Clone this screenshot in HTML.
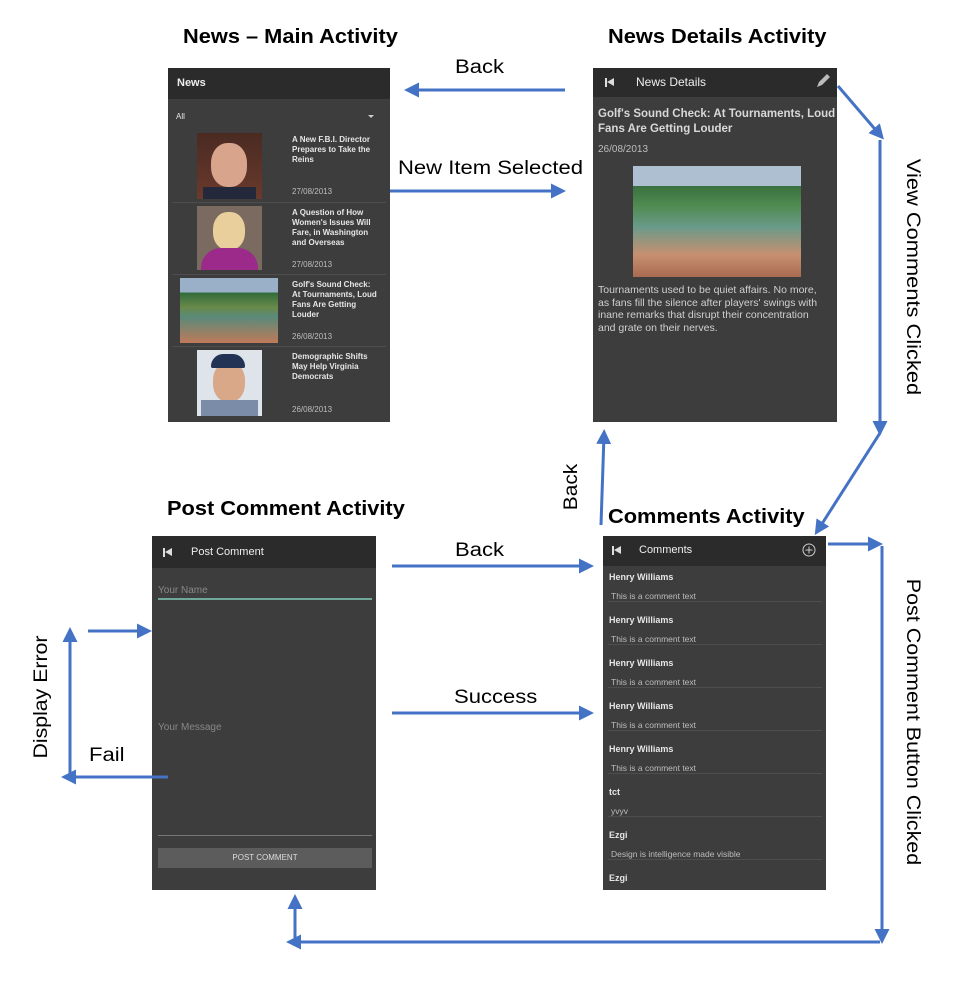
<!DOCTYPE html>
<html><head><meta charset="utf-8"><style>
*{margin:0;padding:0;box-sizing:border-box}
body{width:966px;height:998px;background:#fff;position:relative;overflow:hidden;font-family:"Liberation Sans",Arial,sans-serif}
.a{position:absolute}
.t{font-weight:bold;font-size:20px;color:#000;white-space:nowrap;transform-origin:0 0;transform:scaleX(1.09)}
.l{font-size:19px;color:#000;white-space:nowrap;transform-origin:0 0;transform:scaleX(1.16)}
.scr{background:#3d3d3d;position:absolute}
.hd{background:#2b2b2b;position:absolute;left:0;right:0;top:0;color:#eee;font-size:12px}
.w{color:#e6e6e6;position:absolute}
.g{color:#bdbdbd;position:absolute}
.sep{position:absolute;height:1px;background:#4e4e4e}
.bk{position:absolute;width:9px;height:9px}
.bk:before{content:"";position:absolute;left:0;top:0;width:2px;height:9px;background:#ddd}
.bk:after{content:"";position:absolute;left:2px;top:0;border-right:7px solid #ddd;border-top:4.5px solid transparent;border-bottom:4.5px solid transparent}
</style></head><body>

<div class="a t" style="left:183px;top:26px">News – Main Activity</div>
<div class="a t" style="left:608px;top:26px">News Details Activity</div>
<div class="a t" style="left:167px;top:498px">Post Comment Activity</div>
<div class="a t" style="left:608px;top:506px">Comments Activity</div>

<!-- Main -->
<div class="scr" style="left:168px;top:68px;width:222px;height:354px">
 <div class="hd" style="height:31px"><span style="position:absolute;left:9px;top:9px;font-weight:bold;font-size:11px">News</span></div>
 <div class="w" style="left:8px;top:44px;font-size:8px">All</div>
 <div class="a" style="left:200px;top:47px;border-top:3px solid #ccc;border-left:3px solid transparent;border-right:3px solid transparent"></div>
 <div class="a" style="left:29px;top:65px;width:65px;height:66px;background:linear-gradient(#4a2a22,#6a3a2c)"><div class="a" style="left:14px;top:10px;width:36px;height:44px;border-radius:45%;background:#d9a48c"></div><div class="a" style="left:6px;top:54px;width:53px;height:12px;background:#23283a"></div></div>
 <div class="w" style="left:124px;top:67px;font-size:8px;font-weight:bold;line-height:10px;width:90px">A New F.B.I. Director Prepares to Take the Reins</div>
 <div class="g" style="left:124px;top:119px;font-size:8px">27/08/2013</div>
 <div class="sep" style="left:4px;top:134px;width:214px"></div>
 <div class="a" style="left:29px;top:138px;width:65px;height:64px;background:#7a6a60"><div class="a" style="left:16px;top:6px;width:32px;height:38px;border-radius:45%;background:#e8cf9c"></div><div class="a" style="left:4px;top:42px;width:57px;height:22px;background:#9c2a8a;border-radius:20px 20px 0 0"></div></div>
 <div class="w" style="left:124px;top:140px;font-size:8px;font-weight:bold;line-height:10px;width:92px">A Question of How Women's Issues Will Fare, in Washington and Overseas</div>
 <div class="g" style="left:124px;top:192px;font-size:8px">27/08/2013</div>
 <div class="sep" style="left:4px;top:206px;width:214px"></div>
 <div class="a" style="left:12px;top:210px;width:98px;height:65px;background:linear-gradient(#9ab0c8 0,#9ab0c8 22%,#2f6a3a 22%,#6a8a4a 45%,#5a8a7a 60%,#c07a5a 100%)"></div>
 <div class="w" style="left:124px;top:212px;font-size:8px;font-weight:bold;line-height:10px;width:96px;white-space:nowrap">Golf's Sound Check:<br>At Tournaments, Loud<br>Fans Are Getting<br>Louder</div>
 <div class="g" style="left:124px;top:264px;font-size:8px">26/08/2013</div>
 <div class="sep" style="left:4px;top:278px;width:214px"></div>
 <div class="a" style="left:29px;top:282px;width:65px;height:66px;background:#dfe4ea"><div class="a" style="left:16px;top:12px;width:32px;height:40px;border-radius:45%;background:#d8a888"></div><div class="a" style="left:14px;top:4px;width:34px;height:14px;border-radius:14px 14px 2px 2px;background:#223355"></div><div class="a" style="left:4px;top:50px;width:57px;height:16px;background:#7a8ca8"></div></div>
 <div class="w" style="left:124px;top:284px;font-size:8px;font-weight:bold;line-height:10px;width:90px">Demographic Shifts May Help Virginia Democrats</div>
 <div class="g" style="left:124px;top:337px;font-size:8px">26/08/2013</div>
</div>

<!-- Details -->
<div class="scr" style="left:593px;top:68px;width:244px;height:354px">
 <div class="hd" style="height:29px"><div class="bk" style="left:12px;top:10px"></div><span style="position:absolute;left:43px;top:7px;font-size:12px">News Details</span>
 <svg class="a" style="left:221px;top:4px" width="18" height="18" viewBox="0 0 18 18"><path d="M3 15 L5 10 L13 2 L16 5 L8 13 Z" fill="#bbb"/></svg></div>
 <div class="w" style="left:5px;top:39px;font-size:11.5px;font-weight:bold;line-height:15px;width:240px;color:#d8d8d8;white-space:nowrap">Golf's Sound Check: At Tournaments, Loud<br>Fans Are Getting Louder</div>
 <div class="g" style="left:5px;top:76px;font-size:10px">26/08/2013</div>
 <div class="a" style="left:40px;top:98px;width:168px;height:111px;background:linear-gradient(#aebfd2 0,#aebfd2 18%,#3a7040 18%,#4f8a4f 35%,#6a9a8a 55%,#c89070 80%,#a86a50 100%)"></div>
 <div class="w" style="left:5px;top:216px;font-size:10.5px;line-height:12.5px;width:240px;color:#d0d0d0;white-space:nowrap">Tournaments used to be quiet affairs. No more,<br>as fans fill the silence after players' swings with<br>inane remarks that disrupt their concentration<br>and grate on their nerves.</div>
</div>

<!-- Post comment -->
<div class="scr" style="left:152px;top:536px;width:224px;height:354px">
 <div class="hd" style="height:32px"><div class="bk" style="left:11px;top:12px"></div><span style="position:absolute;left:39px;top:10px;font-size:11px">Post Comment</span></div>
 <div class="g" style="left:6px;top:49px;font-size:10px;color:#888">Your Name</div>
 <div class="a" style="left:6px;top:62px;width:214px;height:2px;background:#6fa898"></div>
 <div class="g" style="left:6px;top:186px;font-size:10px;color:#888">Your Message</div>
 <div class="a" style="left:6px;top:299px;width:214px;height:1px;background:#777"></div>
 <div class="a" style="left:6px;top:312px;width:214px;height:20px;background:#5c5c5c;color:#ddd;font-size:8px;text-align:center;line-height:20px">POST COMMENT</div>
</div>

<!-- Comments -->
<div class="scr" style="left:603px;top:536px;width:223px;height:354px">
 <div class="hd" style="height:30px"><div class="bk" style="left:9px;top:10px"></div><span style="position:absolute;left:36px;top:8px;font-size:11px">Comments</span>
 <svg class="a" style="left:199px;top:7px" width="14" height="14"><circle cx="7" cy="7" r="6" fill="none" stroke="#ccc" stroke-width="1"/><path d="M7 3.5V10.5M3.5 7H10.5" stroke="#ccc"/></svg></div>
 <div class="w" style="left:6px;top:36px;font-size:9px;font-weight:bold">Henry Williams</div><div class="g" style="left:8px;top:55px;font-size:8.5px">This is a comment text</div><div class="sep" style="left:5px;top:65px;width:214px"></div>
 <div class="w" style="left:6px;top:79px;font-size:9px;font-weight:bold">Henry Williams</div><div class="g" style="left:8px;top:98px;font-size:8.5px">This is a comment text</div><div class="sep" style="left:5px;top:108px;width:214px"></div>
 <div class="w" style="left:6px;top:122px;font-size:9px;font-weight:bold">Henry Williams</div><div class="g" style="left:8px;top:141px;font-size:8.5px">This is a comment text</div><div class="sep" style="left:5px;top:151px;width:214px"></div>
 <div class="w" style="left:6px;top:165px;font-size:9px;font-weight:bold">Henry Williams</div><div class="g" style="left:8px;top:184px;font-size:8.5px">This is a comment text</div><div class="sep" style="left:5px;top:194px;width:214px"></div>
 <div class="w" style="left:6px;top:208px;font-size:9px;font-weight:bold">Henry Williams</div><div class="g" style="left:8px;top:227px;font-size:8.5px">This is a comment text</div><div class="sep" style="left:5px;top:237px;width:214px"></div>
 <div class="w" style="left:6px;top:251px;font-size:9px;font-weight:bold">tct</div><div class="g" style="left:8px;top:270px;font-size:8.5px">yvyv</div><div class="sep" style="left:5px;top:280px;width:214px"></div>
 <div class="w" style="left:6px;top:294px;font-size:9px;font-weight:bold">Ezgi</div><div class="g" style="left:8px;top:313px;font-size:8.5px">Design is intelligence made visible</div><div class="sep" style="left:5px;top:323px;width:214px"></div>
 <div class="w" style="left:6px;top:337px;font-size:9px;font-weight:bold">Ezgi</div>
</div>

<!-- labels -->
<div class="a l" style="left:455px;top:57px">Back</div>
<div class="a l" style="left:398px;top:158px">New Item Selected</div>
<div class="a l" style="left:455px;top:540px">Back</div>
<div class="a l" style="left:454px;top:687px">Success</div>
<div class="a l" style="left:89px;top:745px">Fail</div>
<div class="a" style="left:912px;top:277px;width:0;height:0"><div style="position:absolute;font-size:19px;white-space:nowrap;transform:translate(-50%,-50%) rotate(90deg) scaleX(1.15)">View Comments Clicked</div></div>
<div class="a" style="left:912px;top:722px;width:0;height:0"><div style="position:absolute;font-size:19px;white-space:nowrap;transform:translate(-50%,-50%) rotate(90deg) scaleX(1.13)">Post Comment Button Clicked</div></div>
<div class="a" style="left:572px;top:487px;width:0;height:0"><div style="position:absolute;font-size:19px;white-space:nowrap;transform:translate(-50%,-50%) rotate(-90deg) scaleX(1.1)">Back</div></div>
<div class="a" style="left:42px;top:697px;width:0;height:0"><div style="position:absolute;font-size:19px;white-space:nowrap;transform:translate(-50%,-50%) rotate(-90deg) scaleX(1.12)">Display Error</div></div>

<svg class="a" style="left:0;top:0" width="966" height="998">
<defs><marker id="m" markerWidth="5" markerHeight="5" refX="3" refY="2.5" orient="auto" markerUnits="strokeWidth"><path d="M0 0L5 2.5L0 5Z" fill="#4472c4"/></marker></defs>
<g stroke="#4472c4" stroke-width="3" fill="none" marker-end="url(#m)">
<path d="M565 90L410 90"/>
<path d="M390 191L560 191"/>
<path d="M838 86L880 135"/>
<path d="M880 140L880 430"/>
<path d="M880 433L818 530"/>
<path d="M601 525L604 435"/>
<path d="M392 566L588 566"/>
<path d="M392 713L588 713"/>
<path d="M828 544L877 544"/>
<path d="M882 546L882 938"/>
<path d="M880 942L292 942"/>
<path d="M295 940L295 900"/>
<path d="M168 777L67 777"/>
<path d="M70 775L70 633"/>
<path d="M88 631L146 631"/>
</g></svg>
</body></html>
